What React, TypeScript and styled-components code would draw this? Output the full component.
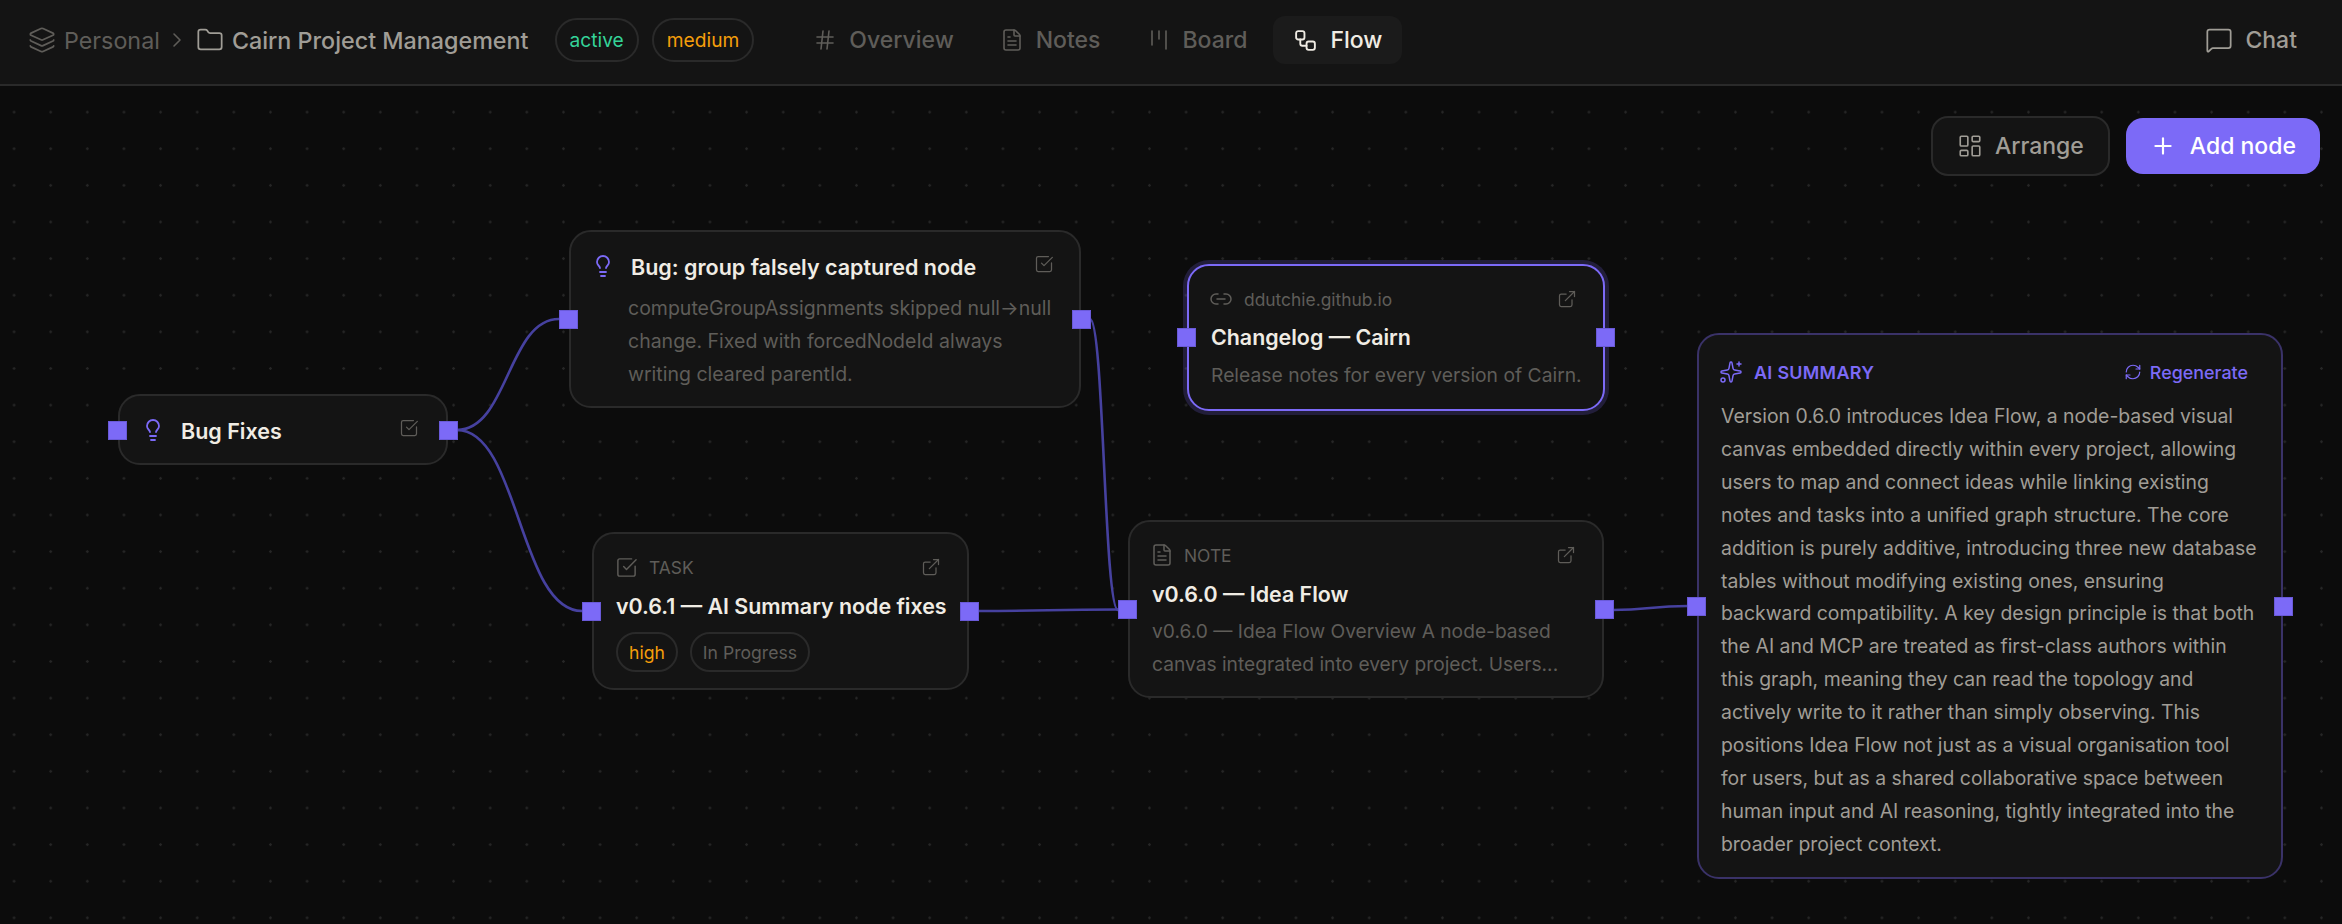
import React from "react";
import styled, { createGlobalStyle } from "styled-components";
import {
  ChevronRight,
  ExternalLink,
  FileText,
  Folder,
  Hash,
  Kanban,
  Layers,
  LayoutDashboard,
  Lightbulb,
  Link2,
  MessageSquare,
  Plus,
  RefreshCw,
  Sparkles,
  SquareCheckBig,
  Workflow,
} from "lucide-react";

const ACCENT = "#7c6af7";
const BORDER = "#2a2a2a";
const MUTED = "#5f5d59";
const SECONDARY = "#a09d96";
const PRIMARY = "#f0ece4";

const GlobalStyle = createGlobalStyle`
  html, body {
    margin: 0;
    padding: 0;
    height: 100%;
    background: #0c0c0c;
    overflow: hidden;
  }
  #root {
    height: 100%;
  }
  * {
    box-sizing: border-box;
  }
`;

const Page = styled.div`
  display: flex;
  flex-direction: column;
  width: 2342px;
  height: 924px;
  font-family: Inter, "Liberation Sans", sans-serif;
  color: ${PRIMARY};
`;

const TopBar = styled.header`
  display: flex;
  align-items: center;
  height: 86px;
  flex: none;
  padding: 0 30px 4px 28px;
  background: #141414;
  border-bottom: 2px solid ${BORDER};
`;

const Crumbs = styled.div`
  display: flex;
  align-items: center;
  font-size: 23.3px;
`;

const CrumbMuted = styled.span`
  display: flex;
  align-items: center;
  gap: 8px;
  color: ${MUTED};
`;

const CrumbCurrent = styled.span`
  display: flex;
  align-items: center;
  gap: 8px;
  color: ${SECONDARY};
  font-weight: 500;
`;

const CrumbSep = styled.span`
  display: flex;
  margin: 0 7px 0 5px;
  color: ${MUTED};
`;

const Badges = styled.div`
  display: flex;
  gap: 13px;
  margin-left: 26px;
`;

const Pill = styled.span<{ $tone?: string; $h?: number; $pad?: number }>`
  display: inline-flex;
  align-items: center;
  height: ${(p) => p.$h ?? 44}px;
  padding: 0 ${(p) => p.$pad ?? 13}px;
  border: 2px solid ${BORDER};
  border-radius: 999px;
  font-size: ${(p) => (p.$h ? 17.6 : 19.2)}px;
  color: ${(p) => p.$tone ?? MUTED};
`;

const Tabs = styled.nav`
  display: flex;
  align-items: center;
  gap: 6px;
  margin-left: 39px;
`;

const Tab = styled.div<{ $active?: boolean }>`
  display: flex;
  align-items: center;
  gap: 12px;
  height: 48px;
  padding: 0 20px;
  border-radius: 12px;
  font-size: 23px;
  font-weight: 500;
  background: ${(p) => (p.$active ? "#1b1b1b" : "transparent")};
  color: ${(p) => (p.$active ? PRIMARY : MUTED)};
`;

const ChatLink = styled.div`
  display: flex;
  align-items: center;
  gap: 12px;
  margin-left: auto;
  margin-right: 15px;
  font-size: 23px;
  font-weight: 500;
  color: ${SECONDARY};
`;

const Canvas = styled.main`
  position: relative;
  flex: 1;
  overflow: hidden;
  background-color: #0c0c0c;
  background-image: radial-gradient(circle, #262626 1.1px, transparent 1.5px);
  background-size: 36.63px 36.63px;
  background-position: 32.4px 7.8px;
`;

const Edges = styled.svg`
  position: absolute;
  left: 0;
  top: -86px;
  width: 2342px;
  height: 924px;
  fill: none;
  stroke: #46419f;
  stroke-width: 2.6;
`;

const CanvasActions = styled.div`
  position: absolute;
  top: 30px;
  right: 22px;
  display: flex;
  align-items: center;
  gap: 16px;
`;

const ArrangeButton = styled.button`
  display: flex;
  align-items: center;
  gap: 12px;
  height: 60px;
  padding: 0 24px;
  border: 2px solid ${BORDER};
  border-radius: 17px;
  background: #141414;
  color: ${SECONDARY};
  font: 500 23px Inter, sans-serif;
`;

const AddButton = styled.button`
  display: flex;
  align-items: center;
  gap: 14px;
  height: 56px;
  padding: 0 24px;
  border: 0;
  border-radius: 17px;
  background: ${ACCENT};
  color: #fff;
  font: 500 23px Inter, sans-serif;
`;

const Node = styled.div<{ $x: number; $y: number; $w: number; $h: number; $variant?: "selected" | "ai" }>`
  position: absolute;
  left: ${(p) => p.$x}px;
  top: ${(p) => p.$y - 86}px;
  width: ${(p) => p.$w}px;
  height: ${(p) => p.$h}px;
  display: flex;
  flex-direction: column;
  background: #141414;
  border: 2px solid
    ${(p) => (p.$variant === "selected" ? ACCENT : p.$variant === "ai" ? "#3a3268" : BORDER)};
  border-radius: 22px;
  box-shadow: ${(p) => (p.$variant === "selected" ? "0 0 0 4px rgba(124,106,247,.2)" : "none")};
`;

const Handle = styled.span<{ $side: "left" | "right"; $y: number }>`
  position: absolute;
  top: ${(p) => p.$y}px;
  ${(p) => p.$side}: -12px;
  width: 19px;
  height: 19px;
  background: ${ACCENT};
  border: 1px solid #6a5ad8;
`;

const GroupHead = styled.div<{ $pad: string }>`
  display: flex;
  align-items: flex-start;
  padding: ${(p) => p.$pad};
`;

const GroupTitle = styled.div`
  margin-left: 16px;
  font-size: 21.5px;
  font-weight: 600;
  line-height: 26px;
  color: ${PRIMARY};
  white-space: nowrap;
`;

const NodeDesc = styled.div<{ $ml?: number; $mt?: number; $size?: number }>`
  margin-left: ${(p) => p.$ml ?? 0}px;
  margin-top: ${(p) => p.$mt ?? 0}px;
  font-size: ${(p) => p.$size ?? 19.5}px;
  line-height: 33px;
  color: ${MUTED};
`;

const CardBody = styled.div<{ $pad: string }>`
  display: flex;
  flex-direction: column;
  padding: ${(p) => p.$pad};
`;

const KindRow = styled.div<{ $gap?: number }>`
  display: flex;
  align-items: center;
  height: 24px;
  gap: ${(p) => p.$gap ?? 11}px;
  font-size: 17.4px;
  color: ${MUTED};
`;

const IconSlot = styled.span<{ $tone?: string; $ml?: number }>`
  display: flex;
  margin-left: ${(p) => p.$ml ?? 0}px;
  color: ${(p) => p.$tone ?? MUTED};
`;

const PushRight = styled.span<{ $mr?: number }>`
  display: flex;
  margin-left: auto;
  margin-right: ${(p) => p.$mr ?? 0}px;
  color: ${MUTED};
`;

const NodeTitle = styled.div<{ $mt: number }>`
  margin-top: ${(p) => p.$mt}px;
  font-size: 21.4px;
  font-weight: 600;
  line-height: 26px;
  color: ${PRIMARY};
  white-space: nowrap;
`;

const ChipRow = styled.div`
  display: flex;
  gap: 12px;
  margin-top: 13px;
`;

const SummaryHead = styled.div`
  display: flex;
  align-items: center;
  height: 26px;
  gap: 11px;
  font-size: 17.9px;
  font-weight: 600;
  color: ${ACCENT};
  letter-spacing: 0.3px;
`;

const RegenerateLink = styled.span`
  display: flex;
  align-items: center;
  gap: 8px;
  margin-left: auto;
  margin-right: 9px;
  font-weight: 500;
  letter-spacing: 0;
`;

const SummaryText = styled.p`
  margin: 15px 0 0;
  font-size: 19.4px;
  line-height: 32.9px;
  color: ${SECONDARY};
`;

const SUMMARY =
  "Version 0.6.0 introduces Idea Flow, a node-based visual canvas embedded directly within every project, allowing users to map and connect ideas while linking existing notes and tasks into a unified graph structure. The core addition is purely additive, introducing three new database tables without modifying existing ones, ensuring backward compatibility. A key design principle is that both the AI and MCP are treated as first-class authors within this graph, meaning they can read the topology and actively write to it rather than simply observing. This positions Idea Flow not just as a visual organisation tool for users, but as a shared collaborative space between human input and AI reasoning, tightly integrated into the broader project context.";

const EDGE_PATHS = [
  "M457 430 C508 430 508 319 559 319",
  "M457 430 C519 430 519 611 582 611",
  "M1090 319 C1104 319 1104 610 1118 610",
  "M978 611 C1048 611 1048 609.5 1118 609.5",
  "M1612 610 C1650 610 1650 606 1688 606",
];

export default function App() {
  return (
    <Page>
      <GlobalStyle />
      <TopBar>
        <Crumbs>
          <CrumbMuted>
            <Layers size={28} strokeWidth={1.5} />
            Personal
          </CrumbMuted>
          <CrumbSep>
            <ChevronRight size={24} strokeWidth={1.6} />
          </CrumbSep>
          <CrumbCurrent>
            <Folder size={28} strokeWidth={1.5} />
            Cairn Project Management
          </CrumbCurrent>
        </Crumbs>
        <Badges>
          <Pill $tone="#34d399">active</Pill>
          <Pill $tone="#f59e0b">medium</Pill>
        </Badges>
        <Tabs>
          <Tab>
            <Hash size={24} strokeWidth={1.6} />
            Overview
          </Tab>
          <Tab>
            <FileText size={24} strokeWidth={1.6} />
            Notes
          </Tab>
          <Tab>
            <Kanban size={24} strokeWidth={1.6} />
            Board
          </Tab>
          <Tab $active>
            <Workflow size={25} strokeWidth={1.8} />
            Flow
          </Tab>
        </Tabs>
        <ChatLink>
          <MessageSquare size={28} strokeWidth={1.5} />
          Chat
        </ChatLink>
      </TopBar>

      <Canvas>
        <Edges viewBox="0 0 2342 924">
          {EDGE_PATHS.map((d) => (
            <path key={d} d={d} />
          ))}
        </Edges>

        <CanvasActions>
          <ArrangeButton>
            <LayoutDashboard size={26} strokeWidth={1.5} />
            Arrange
          </ArrangeButton>
          <AddButton>
            <Plus size={26} strokeWidth={2} />
            Add node
          </AddButton>
        </CanvasActions>

        <Node $x={118} $y={394} $w={330} $h={71}>
          <Handle $side="left" $y={25} />
          <Handle $side="right" $y={25} />
          <GroupHead $pad="22px 20px 0 24px">
            <IconSlot $tone={ACCENT} $ml={-3}>
              <Lightbulb size={24} strokeWidth={1.8} />
            </IconSlot>
            <GroupTitle>Bug Fixes</GroupTitle>
            <PushRight $mr={7}>
              <SquareCheckBig size={20} strokeWidth={1.5} />
            </PushRight>
          </GroupHead>
        </Node>

        <Node $x={569} $y={230} $w={512} $h={178}>
          <Handle $side="left" $y={78} />
          <Handle $side="right" $y={78} />
          <CardBody $pad="22px 24px 0">
            <GroupHead $pad="0">
              <IconSlot $tone={ACCENT} $ml={-4}>
                <Lightbulb size={24} strokeWidth={1.8} />
              </IconSlot>
              <GroupTitle>Bug: group falsely captured node</GroupTitle>
              <PushRight $mr={1}>
                <SquareCheckBig size={20} strokeWidth={1.5} />
              </PushRight>
            </GroupHead>
            <NodeDesc $ml={33} $mt={12}>
              computeGroupAssignments skipped null→null change. Fixed with forcedNodeId always writing cleared parentId.
            </NodeDesc>
          </CardBody>
        </Node>

        <Node $x={592} $y={532} $w={377} $h={158}>
          <Handle $side="left" $y={68} />
          <Handle $side="right" $y={68} />
          <CardBody $pad="21px 26px 0 22px">
            <KindRow>
              <IconSlot $ml={-1}>
                <SquareCheckBig size={23} strokeWidth={1.5} />
              </IconSlot>
              TASK
              <PushRight>
                <ExternalLink size={20} strokeWidth={1.5} />
              </PushRight>
            </KindRow>
            <NodeTitle $mt={14}>v0.6.1 — AI Summary node fixes</NodeTitle>
            <ChipRow>
              <Pill $h={40} $pad={11} $tone="#f59e0b">high</Pill>
              <Pill $h={40} $pad={11}>In Progress</Pill>
            </ChipRow>
          </CardBody>
        </Node>

        <Node $x={1187} $y={264} $w={418} $h={147} $variant="selected">
          <Handle $side="left" $y={62} />
          <Handle $side="right" $y={62} />
          <CardBody $pad="21px 16px 0 22px">
            <KindRow>
              <IconSlot $ml={-2}>
                <Link2 size={24} strokeWidth={1.5} />
              </IconSlot>
              ddutchie.github.io
              <PushRight $mr={10}>
                <ExternalLink size={20} strokeWidth={1.5} />
              </PushRight>
            </KindRow>
            <NodeTitle $mt={13}>Changelog — Cairn</NodeTitle>
            <NodeDesc $mt={9} $size={19.3}>Release notes for every version of Cairn.</NodeDesc>
          </CardBody>
        </Node>

        <Node $x={1128} $y={520} $w={476} $h={178}>
          <Handle $side="left" $y={78} />
          <Handle $side="right" $y={78} />
          <CardBody $pad="21px 26px 0 22px">
            <KindRow $gap={10}>
              <IconSlot $ml={-2}>
                <FileText size={24} strokeWidth={1.5} />
              </IconSlot>
              NOTE
              <PushRight>
                <ExternalLink size={20} strokeWidth={1.5} />
              </PushRight>
            </KindRow>
            <NodeTitle $mt={14}>v0.6.0 — Idea Flow</NodeTitle>
            <NodeDesc $mt={8} $size={19.2}>
              v0.6.0 — Idea Flow Overview A node-based canvas integrated into every project. Users...
            </NodeDesc>
          </CardBody>
        </Node>

        <Node $x={1697} $y={333} $w={586} $h={546} $variant="ai">
          <Handle $side="left" $y={262} />
          <Handle $side="right" $y={262} />
          <CardBody $pad="24px 24px 0 22px">
            <SummaryHead>
              <IconSlot $tone={ACCENT} $ml={-2}>
                <Sparkles size={24} strokeWidth={1.5} />
              </IconSlot>
              AI SUMMARY
              <RegenerateLink>
                <RefreshCw size={18} strokeWidth={1.6} />
                Regenerate
              </RegenerateLink>
            </SummaryHead>
            <SummaryText>{SUMMARY}</SummaryText>
          </CardBody>
        </Node>
      </Canvas>
    </Page>
  );
}
